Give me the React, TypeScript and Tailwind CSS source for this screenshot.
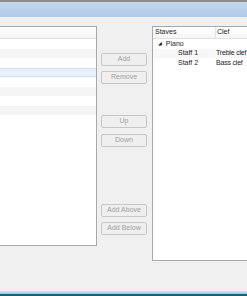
const FONT = { fontFamily: '"Liberation Sans", "DejaVu Sans", sans-serif' };

const LEFT_ROWS: { bg: string }[] = [
    { bg: 'bg-white' },
    { bg: 'bg-[#f5f5f5]' },
    { bg: 'bg-white' },
    { bg: 'bg-[#e8f1fb] border-y border-[#cfe0f3]' },
    { bg: 'bg-white' },
    { bg: 'bg-[#f5f5f5]' },
    { bg: 'bg-white' },
    { bg: 'bg-[#f5f5f5]' },
];

const STAVES = [
    { name: 'Staff 1', clef: 'Treble clef', alt: true },
    { name: 'Staff 2', clef: 'Bass clef', alt: false },
];

function Btn({ label, className = '' }: { label: string; className?: string }) {
    return (
        <div
            className={`h-[13px] w-[46px] flex items-center justify-center border border-[#c6c6c6] rounded-[2px] bg-[#efefef] text-[7px] text-[#a0a0a0] ${className}`}
        >
            {label}
        </div>
    );
}

export default function App() {
    return (
        <div className="w-[247px] h-[296px] overflow-hidden bg-[#f0f0f0] flex flex-col" style={FONT}>
            {/* window title strip */}
            <div className="h-[2px] bg-[#8d8d8d]" />
            <div className="h-[15px] bg-gradient-to-b from-[#c3d7ec] to-[#aecbe7]" />

            <div className="flex-1 flex items-start pt-[9px]">
                {/* left list */}
                <div className="w-[97px] h-[220px] shrink-0 bg-white border border-l-0 border-[#a9a9a9] flex flex-col">
                    <div className="h-[12px] bg-gradient-to-b from-white to-[#f3f3f3] border-b border-[#e2e2e2]" />
                    {LEFT_ROWS.map((r, i) => (
                        <div key={i} className={`h-[9.5px] ${r.bg}`} />
                    ))}
                </div>

                {/* buttons */}
                <div className="w-[46px] shrink-0 ml-[4px] flex flex-col">
                    <Btn label="Add" className="mt-[27px]" />
                    <Btn label="Remove" className="mt-[5px]" />
                    <Btn label="Up" className="mt-[31px]" />
                    <Btn label="Down" className="mt-[6px]" />
                    <Btn label="Add Above" className="mt-[57px]" />
                    <Btn label="Add Below" className="mt-[5px]" />
                </div>

                {/* staves tree */}
                <div className="w-[130px] h-[235px] shrink-0 ml-[5px] bg-white border border-[#a9a9a9] flex flex-col text-[7px] text-[#1e1e1e]">
                    <div className="h-[12px] flex items-center border-b border-[#e2e2e2] bg-gradient-to-b from-white to-[#f6f6f6]">
                        <div className="w-[63px] pl-[2px] border-r border-[#e4e4e4] h-full flex items-center">Staves</div>
                        <div className="pl-[1px]">Clef</div>
                    </div>
                    <div className="h-[9.5px] flex items-center pl-[5px]">
                        <span className="text-[5px] mr-[4px]">◢</span>
                        <span>Piano</span>
                    </div>
                    {STAVES.map((s) => (
                        <div key={s.name} className={`h-[9.5px] flex items-center ${s.alt ? 'bg-[#f7f7f7]' : ''}`}>
                            <div className="w-[63px] pl-[25px]">{s.name}</div>
                            <div className="whitespace-nowrap tracking-[-0.2px]">{s.clef}</div>
                        </div>
                    ))}
                </div>
            </div>

            {/* taskbar strip */}
            <div className="h-[3px] bg-gradient-to-b from-[#cfe2f3] to-[#9fc4e6]" />
            <div className="h-[2px] bg-[#1f5f73]" />
        </div>
    );
}
